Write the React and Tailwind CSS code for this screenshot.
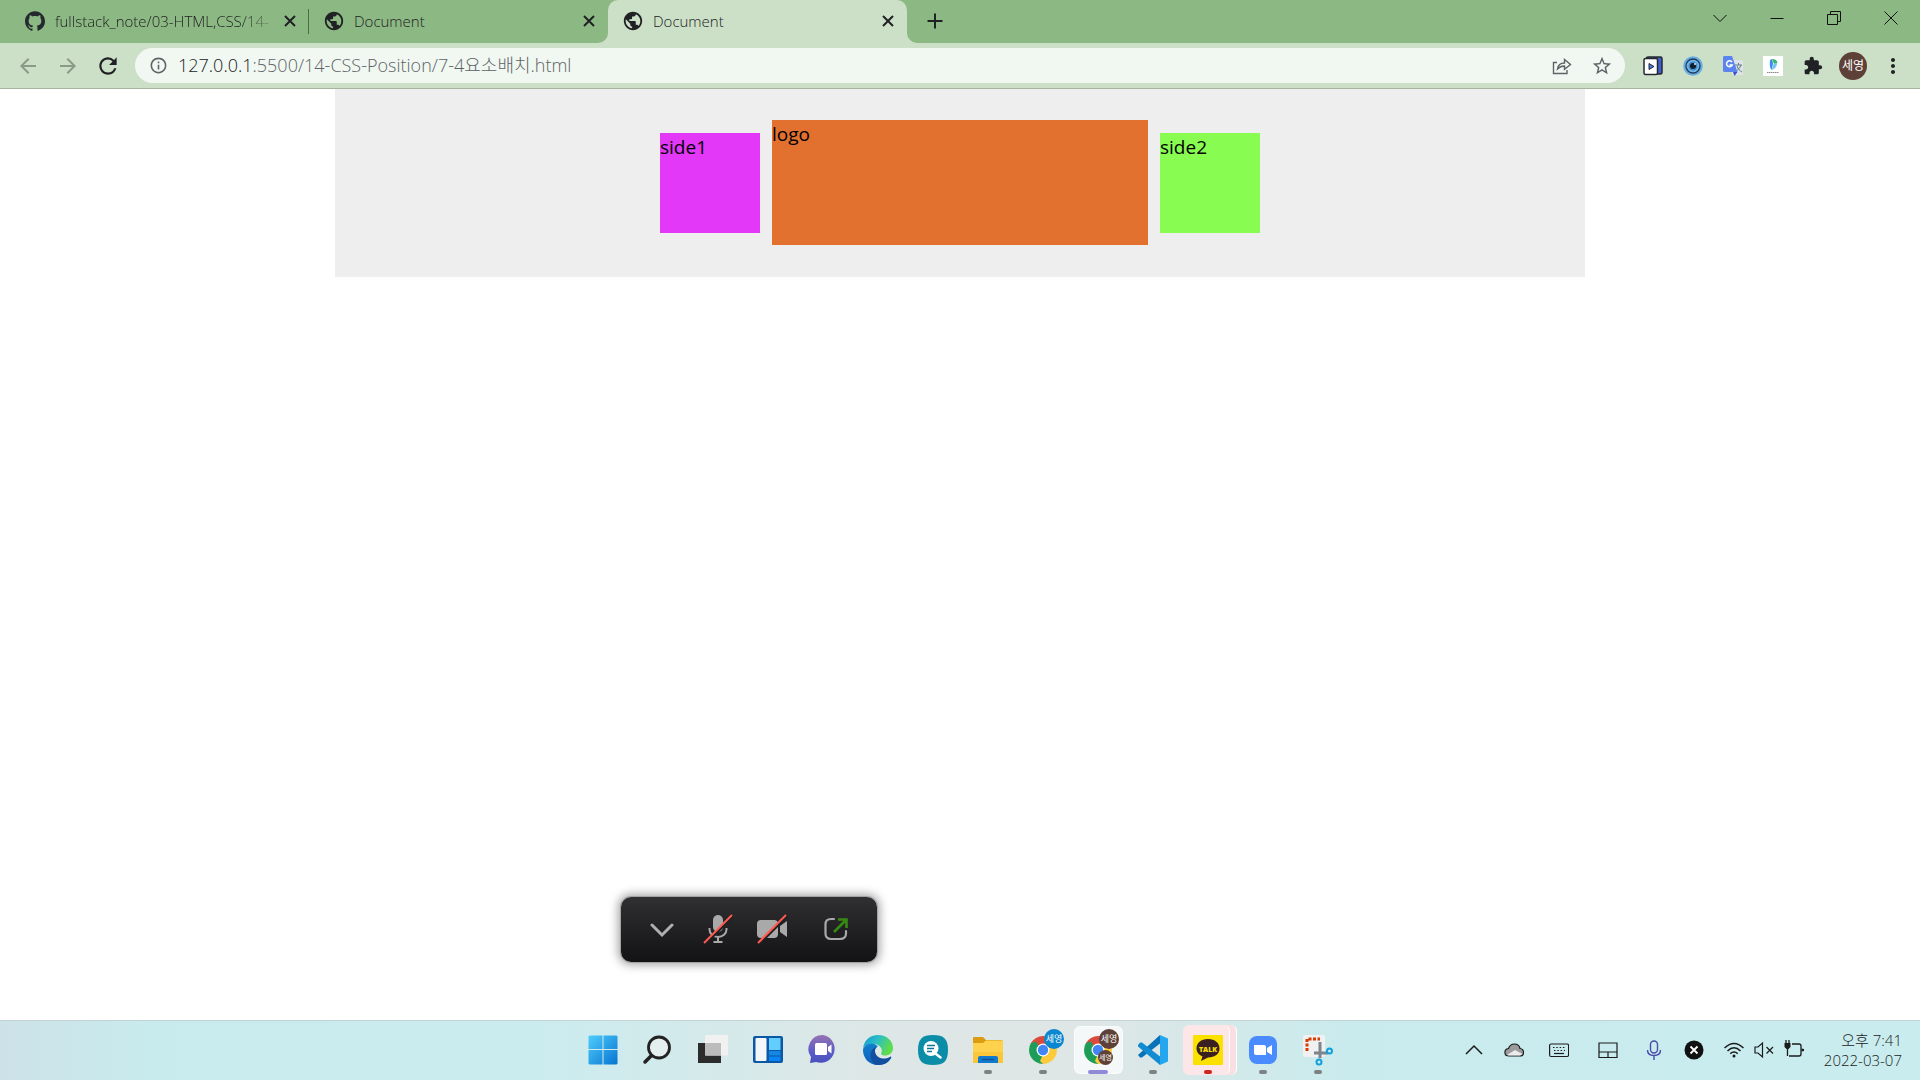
import React from "react";
import { SiGithub } from "react-icons/si";
import { MdPublic, MdExtension, MdStarBorder, MdOutlineInfo, MdMoreVert, MdRefresh, MdArrowBack, MdArrowForward } from "react-icons/md";

const FONT = "font-['Open_Sans','Noto_Sans_CJK_KR',sans-serif]";

function Tab({ icon, title, active, fade, divider }) {
  return (
    <div className={`relative flex h-full w-[299px] min-w-0 items-center pb-px pl-[15px] pr-[11px] ${active ? "rounded-t-[10px] bg-[#cce0c7]" : ""}`}>
      {active && (
        <>
          <svg viewBox="0 0 10 10" className="absolute -left-2.5 bottom-0 size-2.5" aria-hidden="true"><path d="M10 0V10H0A10 10 0 0 0 10 0Z" fill="#cce0c7" /></svg>
          <svg viewBox="0 0 10 10" className="absolute -right-2.5 bottom-0 size-2.5" aria-hidden="true"><path d="M0 0V10H10A10 10 0 0 1 0 0Z" fill="#cce0c7" /></svg>
        </>
      )}
      {icon}
      <span className={`mx-2.5 min-w-0 flex-1 whitespace-nowrap text-[15px] font-light text-[#202124] ${fade ? "[mask-image:linear-gradient(to_right,black_85%,transparent_105%)]" : ""}`}>{title}</span>
      <button aria-label="탭 닫기">
        <svg viewBox="0 0 16 16" className="size-4" fill="none" stroke="#202124" strokeWidth="2"><path d="M3 3L13 13M13 3L3 13" /></svg>
      </button>
      {divider && <span className="absolute right-0 top-[9px] h-[25px] w-px bg-[#4f6a4a]" />}
    </div>
  );
}

function WinButton({ label, children }) {
  return (
    <button aria-label={label} className="flex h-9 w-[57px] items-center justify-center">
      <svg viewBox="0 0 14 14" className="size-3.5" fill="none" stroke="#111" strokeWidth="1">{children}</svg>
    </button>
  );
}

function TabStrip() {
  const globe = <MdPublic className="size-[22px] -mx-px shrink-0 text-[#202124]" />;
  return (
    <div className="flex h-[43px] bg-[#8cb883] pl-2.5 pr-px">
      <Tab icon={<SiGithub className="size-5 shrink-0 text-[#24292f]" />} title="fullstack_note/03-HTML,CSS/14-" fade divider />
      <Tab icon={globe} title="Document" />
      <Tab icon={globe} title="Document" active />
      <button aria-label="새 탭" className="ml-5 pb-px">
        <svg viewBox="0 0 16 16" className="size-4" fill="none" stroke="#202124" strokeWidth="2"><path d="M8 .5V15.5M.5 8H15.5" /></svg>
      </button>
      <div className="ml-auto flex">
        <WinButton label="탭 검색"><path d="M.5 4L7 10.5L13.5 4" /></WinButton>
        <WinButton label="최소화"><path d="M.5 7.5H13.5" /></WinButton>
        <WinButton label="이전 크기로 복원"><path d="M.5 3.5H10.5V13.5H.5ZM3.5 3.5V.5H13.5V10.5H10.5" /></WinButton>
        <WinButton label="닫기"><path d="M.5 .5L13.5 13.5M13.5 .5L.5 13.5" /></WinButton>
      </div>
    </div>
  );
}

function ToolButton({ label, children }) {
  return <button aria-label={label} className="flex size-10 shrink-0 items-center justify-center">{children}</button>;
}

function Toolbar() {
  return (
    <div className="flex h-[46px] items-center border-b border-[#a3b59f] bg-[#cce0c7] pl-2 pr-[7px] text-[#202124]">
      <ToolButton label="뒤로"><MdArrowBack className="size-6 text-[#8a9a87]" /></ToolButton>
      <ToolButton label="앞으로"><MdArrowForward className="size-6 text-[#8a9a87]" /></ToolButton>
      <ToolButton label="새로고침"><MdRefresh className="size-[26px]" /></ToolButton>
      <div className="ml-[7px] flex h-[35px] flex-1 items-center rounded-full bg-[#f1f8f1] pl-3.5 pr-[3px]">
        <MdOutlineInfo className="size-[19px] text-[#5f6368]" />
        <div className="ml-2.5 flex-1 whitespace-nowrap text-[18px] font-light text-[#5f6368]"><span className="text-[#202124]">127.0.0.1</span>:5500/14-CSS-Position/7-4요소배치.html</div>
        <ToolButton label="공유">
          <svg viewBox="0 0 20 20" className="size-5" fill="none" stroke="#5f6368" strokeWidth="1.4"><path d="M5 6.500H1.500V17.500H15V14M5.500 13C6 9 8.500 7 12.500 7V3.500L18.500 8.500L12.500 13.200V10C9.500 10 7.500 10.800 5.500 13Z" /></svg>
        </ToolButton>
        <ToolButton label="북마크"><MdStarBorder className="size-[22px] text-[#5f6368]" /></ToolButton>
      </div>
      <div className="ml-2 flex">
        <ToolButton label="동영상 확장">
          <svg viewBox="0 0 20 20" className="size-5"><rect x="3.500" y="1" width="15.500" height="17" rx="1.500" fill="#3d5fd0" stroke="#26282e" strokeWidth="1.500" /><rect x="1" y="2.500" width="13.500" height="16" rx="1.500" fill="#fff" stroke="#26282e" strokeWidth="1.500" /><path d="M6 7.500L11 10.500L6 13.500Z" fill="#4a78ea" stroke="#26282e" /></svg>
        </ToolButton>
        <ToolButton label="눈 확장">
          <svg viewBox="0 0 20 20" className="size-5"><circle cx="10" cy="10" r="9.800" fill="#69ade2" /><circle cx="10" cy="10" r="7" fill="#6fb5ec" stroke="#233c58" strokeWidth="1.300" /><circle cx="10" cy="10" r="4.500" fill="#438bc8" /><circle cx="10" cy="10" r="3" fill="#111d2b" /><circle cx="12" cy="8" r="1" fill="#cfe9ff" /></svg>
        </ToolButton>
        <ToolButton label="Google 번역">
          <svg viewBox="0 0 20 20" className="size-5"><rect x="9" y="4" width="11" height="15" rx="1" fill="#dfe3e6" /><path d="M12 9H19M15.500 7V9M18 9C17 12 15 14 13 15M14 10C15 13 17 15 19 16" stroke="#607d8b" fill="none" /><path d="M1 0H9L14.500 16H1.500Q0 16 0 14.500V1.500Q0 0 1 0Z" fill="#5b84ee" /><path d="M10 16H14.500L11.500 20Z" fill="#3f51c4" /><path d="M9 6A3 3 0 1 0 9.300 9H6.500" stroke="#fff" strokeWidth="1.500" fill="none" /></svg>
        </ToolButton>
        <ToolButton label="확장">
          <svg viewBox="0 0 20 20" className="size-5"><path d="M0 0H20V20H0Z" fill="#fff" /><path d="M7 4L9 3L10 7L9 14Q6 12 7 4Z" fill="#3e8bea" /><path d="M9 3Q14 3 14.500 7L11 8Z" fill="#38b86a" /><path d="M14 7Q14 12 9 14L10.500 8Z" fill="#72c5f3" /><path d="M4 16.500H16" stroke="#8a8a8a" strokeDasharray="1.500 .5" /></svg>
        </ToolButton>
        <ToolButton label="확장 프로그램"><MdExtension className="size-5" /></ToolButton>
        <ToolButton label="프로필"><span className="flex size-7 items-center justify-center rounded-full bg-[#5d4037] text-xs text-white">세영</span></ToolButton>
        <ToolButton label="메뉴"><MdMoreVert className="size-6" /></ToolButton>
      </div>
    </div>
  );
}

function Page() {
  return (
    <main className="flex-1 bg-white">
      <header className="mx-auto flex h-[188px] max-w-[1250px] items-center justify-center gap-3 bg-[#eee] pb-px text-[19px] leading-7 text-black">
        <div className="size-[100px] bg-[#e338f7]">side1</div>
        <div className="h-[125px] w-[376px] bg-[#e2702f]">logo</div>
        <div className="size-[100px] bg-[#88fc50]">side2</div>
      </header>
    </main>
  );
}

function MeetingBar() {
  return (
    <div className="absolute bottom-[118px] left-[621px] flex h-[65px] w-64 items-center rounded-[10px] bg-linear-to-b from-[#303032] to-[#131315] pb-0.5 shadow-[0_0_10px_3px_rgba(0,0,0,0.35),0_0_0_1px_rgba(210,210,210,0.9)]">
      <button aria-label="접기" className="ml-[23px] flex w-9 justify-center">
        <svg viewBox="0 0 24 24" className="size-6" fill="none" stroke="#b0b0b0" strokeWidth="3" strokeLinecap="round"><path d="M2 8L12 18L22 8" /></svg>
      </button>
      <button aria-label="음소거 해제" className="ml-6 flex w-7 justify-center">
        <svg viewBox="0 0 30 30" className="size-[30px] shrink-0" fill="none" stroke="#a9a9a9" strokeWidth="2"><rect x="10" y="1" width="10" height="17" rx="5" fill="#a9a9a9" stroke="none" /><path d="M6.500 14V15.500A8.500 7.500 0 0 0 23.500 15.500V14M15 23V28M10.500 28H19.500" /><path d="M2 30L30 2" stroke="#1f1f21" strokeWidth="3" /><path d="M1 29L29 1" stroke="#ff5a52" strokeWidth="2" /></svg>
      </button>
      <button aria-label="비디오 시작" className="ml-6 flex w-8 justify-center">
        <svg viewBox="0 0 32 30" className="h-[30px] w-8" fill="#a9a9a9"><rect x="1" y="6" width="21" height="18" rx="4" /><path d="M24 12L31 7V23L24 18Z" /><path d="M3 30L31 2" stroke="#1f1f21" strokeWidth="3" /><path d="M2 29L30 1" stroke="#ff5a52" strokeWidth="2" /></svg>
      </button>
      <button aria-label="공유" className="ml-9 flex w-6 justify-center">
        <svg viewBox="0 0 24 24" className="size-6" fill="none" strokeWidth="2.200"><path d="M10 2H7Q1.500 2 1.500 7.500V16.500Q1.500 22 7 22H16Q22 22 22 16.500V14" stroke="#a9a9a9" strokeLinecap="round" /><path d="M10 15L22 3M14 2.500H22.500V11" stroke="#368a12" strokeWidth="2.600" /></svg>
      </button>
    </div>
  );
}

function ChromeMark() {
  return (
    <>
      <path d="M14 14L1.900 7A14 14 0 0 1 26.100 7Z" fill="#dc4a3d" />
      <path d="M14 14L26.100 7A14 14 0 0 1 14 28Z" fill="#fccb3c" />
      <path d="M14 14L14 28A14 14 0 0 1 1.900 7Z" fill="#1d9d58" />
      <path d="M14 7.500H26.400L24 12H18Z" fill="#dc4a3d" />
      <path d="M8.400 17.300L1.900 7L7 5.500L12 14Z" fill="#1d9d58" />
      <path d="M19.600 17.300L14 28L11 25L15 16Z" fill="#fccb3c" />
      <circle cx="14" cy="14" r="6.500" fill="#fff" />
      <circle cx="14" cy="14" r="5.200" fill="#4285f4" />
    </>
  );
}

function TaskButton({ label, children, state }) {
  return (
    <button aria-label={label} className="relative flex h-full w-[55px] items-center justify-center">
      {state === "active" && <span className="absolute inset-x-[3px] inset-y-[5px] rounded-md border border-white/60 bg-[#f4f8f8]" />}
      {state === "alert" && <><span className="absolute inset-y-1 left-4 -right-px rounded-md border-r border-white bg-[#f9dfe1]" /><span className="absolute inset-y-1 left-0.5 right-1.5 rounded-md border-r border-white bg-[#fde6e8]" /></>}
      <svg viewBox="0 0 30 30" className="relative size-[30px] overflow-visible">{children}</svg>
      {state === "open" && <span className="absolute bottom-[5px] h-1 w-2 rounded-full bg-[#7c8182]" />}
      {state === "active" && <span className="absolute bottom-[5px] h-1 w-5 rounded-full bg-[#8f8bd8]" />}
      {state === "alert" && <span className="absolute bottom-[5px] h-1 w-2 rounded-full bg-[#c8281e]" />}
    </button>
  );
}

function TaskApps() {
  return (
    <div className="flex h-full pl-px">
      <TaskButton label="시작">
        <defs><linearGradient id="win" x1="0" y1="0" x2="1" y2="1"><stop stopColor="#4fcdfd" /><stop offset="1" stopColor="#0674d0" /></linearGradient></defs>
        <path d="M1.500 .5H14.500V14H.5V1.500ZM15.500 .5H28.500L29.500 1.500V14H15.500ZM.5 15H14.500V29.500H1.500L.5 28.500ZM15.500 15H29.500V28.500L28.500 29.500H15.500Z" fill="url(#win)" />
      </TaskButton>
      <TaskButton label="검색"><circle cx="16" cy="12.500" r="10.500" fill="#e5eeee" stroke="#222" strokeWidth="2.800" /><path d="M8.500 20.500L2 27" stroke="#222" strokeWidth="3.500" strokeLinecap="round" /></TaskButton>
      <TaskButton label="작업 보기"><path d="M0 8H23V28H0Z" fill="#2c2c2c" /><rect x="7" y="0" width="23" height="20.500" rx="1" fill="#f1f1f1" /><path d="M7 8H23V20.500H7Z" fill="#bcbcbc" /></TaskButton>
      <TaskButton label="위젯"><rect x="0" y="1" width="30" height="27" rx="2" fill="#0d58a4" /><rect x="2.500" y="3" width="11" height="23" rx="1" fill="#f4f7fa" /><path d="M16 3H27.500V15H16Z" fill="#62ceff" /><path d="M16 16H27.500V20.500H16Z" fill="#1487e4" /><path d="M16 21.500H27.500V26H16Z" fill="#0b85f4" /></TaskButton>
      <TaskButton label="채팅">
        <defs><linearGradient id="chat" x1="0" y1="0" x2="0" y2="1"><stop stopColor="#9673b2" /><stop offset=".6" stopColor="#5b5cc8" /><stop offset="1" stopColor="#4850bd" /></linearGradient></defs>
        <path d="M15 0A14 14 0 1 1 8 27L2 28L3 22A14 14 0 0 1 15 0Z" fill="url(#chat)" /><rect x="7" y="8" width="12" height="12" rx="1.500" fill="#fff" /><path d="M20 12L23.500 9.500V18.500L20 16Z" fill="#fff" />
      </TaskButton>
      <TaskButton label="Edge">
        <defs><linearGradient id="edgeA" x1="0" y1="0" x2="1" y2=".4"><stop stopColor="#1395d4" /><stop offset=".5" stopColor="#2bbfc4" /><stop offset="1" stopColor="#5fdc4a" /></linearGradient><linearGradient id="edgeB" x1="0" y1="0" x2="0" y2="1"><stop stopColor="#1080ce" /><stop offset="1" stopColor="#0f5fb8" /></linearGradient></defs>
        <path d="M0 14C1 5 7 0 15 0C24 0 30 6 30 13C30 18 26 20.500 22 20.500C19 20.500 17.500 19.500 18.500 17.500C20 14 17 9.500 11 9C5 8.500 1 11 0 14Z" fill="url(#edgeA)" />
        <path d="M0 14C2 9.500 7 8 11 9C15 10 15.500 12 13 13C11 14 11.500 21 17 23.500C21 25 25 23.500 27 22C28 21.500 28.500 22 28 23C25 28 20 30 15 30C6 30 -.5 23 0 14Z" fill="url(#edgeB)" />
        <path d="M13 12C7 14 5 23 12 29.600C19 31 25 28.500 28 23C28.500 22 28 21.500 27 22C20 26 11 22 12 15Z" fill="#124f9e" />
      </TaskButton>
      <TaskButton label="화면 검색"><path d="M15 0C26 0 30 4 30 15S26 30 15 30S0 26 0 15S4 0 15 0Z" fill="#0b8da8" /><circle cx="13" cy="13.500" r="7.500" fill="#fff" /><path d="M18 19L22.500 22.500" stroke="#fff" strokeWidth="2.500" strokeLinecap="round" /><path d="M9 10.500H17M9 13.500H16M9 16.500H14" stroke="#0b7896" strokeWidth="1.500" /></TaskButton>
      <TaskButton label="파일 탐색기" state="open"><path d="M0 3Q0 2 1 2H10L13 5H28Q30 5 30 7V12H0Z" fill="#db9c12" /><path d="M0 8L10 8L13 5.500H30V28H0Z" fill="#ffd24e" /><path d="M0 17H30V28H0Z" fill="#fbc63a" /><path d="M5 28V23Q5 21 7 21H23Q25 21 25 23V28Z" fill="#127bd0" /><path d="M9 24.500H21" stroke="#0b5498" strokeWidth="1.500" /></TaskButton>
      <TaskButton label="Chrome 세영" state="open"><g transform="translate(1 1)"><ChromeMark /></g><circle cx="26" cy="4" r="10" fill="#0b86d0" /><text x="26" y="7" textAnchor="middle" fontSize="9" fill="#fff">세영</text></TaskButton>
      <TaskButton label="Chrome" state="active"><g transform="translate(1 1)"><ChromeMark /></g><circle cx="26" cy="4" r="10" fill="#5d4037" /><text x="26" y="7" textAnchor="middle" fontSize="9" fill="#fff">세영</text><circle cx="22.500" cy="22.500" r="7.500" fill="#5d4037" /><text x="22.500" y="25" textAnchor="middle" fontSize="7" fill="#fff">세영</text></TaskButton>
      <TaskButton label="Visual Studio Code" state="open"><path d="M22 0L30 3.500V26.500L22 30Z" fill="#24a7ee" /><path d="M0 20L22 0V8.500L4 22.500L2 22.500Z" fill="#0873b8" /><path d="M0 10L2 7.500H4L22 21.500V30L0 11.500Z" fill="#128bd2" /></TaskButton>
      <TaskButton label="카카오톡" state="alert"><rect width="30" height="30" rx="1" fill="#fae100" /><path d="M15 4C22 4 26.500 8 26.500 13.500S22 22.500 15 22.500L8 26L9.500 21.500C5.500 20 3.500 17 3.500 13.500C3.500 8 8 4 15 4Z" fill="#3b2022" /><text x="15" y="16.500" textAnchor="middle" fontSize="7" fontWeight="800" fill="#fae100">TALK</text></TaskButton>
      <TaskButton label="Zoom" state="open"><rect x="1" y="1" width="28" height="28" rx="8" fill="#4a8cff" /><path d="M6 10H16Q18 10 18 12V20H8Q6 20 6 18ZM19 13L24 10V20L19 17Z" fill="#fff" /></TaskButton>
      <TaskButton label="캡처 도구" state="open"><rect width="22" height="22" rx="2" fill="#f1f1f1" /><path d="M4 16V4H17" fill="none" stroke="#d83b01" strokeWidth="3" strokeDasharray="3 1.500" /><path d="M17 7V23M11 18H25" stroke="#7c858b" strokeWidth="3" /><circle cx="26.500" cy="16" r="2.500" fill="none" stroke="#129fdd" strokeWidth="2" /><circle cx="16" cy="27" r="2.500" fill="none" stroke="#129fdd" strokeWidth="2" /></TaskButton>
    </div>
  );
}

function TrayButton({ label, width, children }) {
  return (
    <button aria-label={label} className={`flex h-full shrink-0 items-center justify-center ${width}`}>
      <svg viewBox="0 0 20 20" className="size-5" fill="none" stroke="#1b1b1b" strokeWidth="1.200">{children}</svg>
    </button>
  );
}

function Tray() {
  return (
    <div className="flex h-full items-center pr-[18px]">
      <TrayButton label="숨겨진 아이콘 표시" width="w-10"><path d="M2 14L10 6L18 14" strokeWidth="1.500" /></TrayButton>
      <TrayButton label="OneDrive" width="w-10"><path d="M1 13Q.5 9 4.500 8.500Q6 4 10.500 4Q15 4 16 8.500Q19.500 9 19.500 12.500Q19.500 16 16 16H5Q1 16 1 13Z" fill="#9b9b9b" /><path d="M3 15L11 10L18.500 14L16 15.400H5Z" fill="#ececec" stroke="none" /></TrayButton>
      <TrayButton label="터치 키보드" width="w-[50px]"><rect x=".6" y="4" width="19" height="12.500" rx="1.500" /><path d="M4 7.500H17M5 10.500H16" strokeDasharray="1.500 1.800" /><path d="M5 13.500H15" /></TrayButton>
      <TrayButton label="터치 패드" width="w-12"><path d="M1 3H19V17.500H1ZM1 12H19M10 12V17.500" /></TrayButton>
      <TrayButton label="마이크" width="w-11"><g stroke="#4a4cab" strokeWidth="1.400"><rect x="6.500" y="1" width="7" height="12" rx="3.500" /><path d="M3.500 10Q3.500 15.500 10 15.500T16.500 10M10 16V20" /></g></TrayButton>
      <TrayButton label="상태" width="w-9"><circle cx="10" cy="10" r="9.500" fill="#111" stroke="none" /><path d="M6.500 6.500L13.500 13.500M13.500 6.500L6.500 13.500" stroke="#fff" strokeWidth="1.800" /></TrayButton>
      <button aria-label="네트워크, 소리, 배터리" className="ml-3 flex h-full items-center gap-2.5">
        <svg viewBox="0 0 20 20" className="size-5" fill="none" stroke="#1b1b1b" strokeWidth="1.500"><path d="M.5 8Q10 -1 19.500 8M3.500 11Q10 4.500 16.500 11M6.300 13.600Q10 10.300 13.700 13.600" /><circle cx="10" cy="16" r="1.500" fill="#1b1b1b" stroke="none" /></svg>
        <svg viewBox="0 0 20 20" className="size-5" fill="none" stroke="#1b1b1b" strokeWidth="1.200"><path d="M1 7H4L8.500 3V17L4 13H1ZM12.500 7L19 13.500M19 7L12.500 13.500" /></svg>
        <svg viewBox="0 0 20 20" className="size-5" fill="none" stroke="#1b1b1b" strokeWidth="1.300"><path d="M8 4H15Q17 4 17 6V14Q17 16 15 16H5" /><path d="M.5 3H6.500V7L4.500 9H2.500L.5 7ZM17.500 8.500L20 9V11L17.500 11.500Z" fill="#1b1b1b" stroke="none" /><path d="M2 0V4M5 0V4M3.500 8V16" /></svg>
      </button>
      <button className="ml-5 text-right text-[15px] font-light leading-5 text-[#1b1b1b]">
        <time className="block">오후 7:41</time>
        <time className="block">2022-03-07</time>
      </button>
    </div>
  );
}

export default function App() {
  return (
    <div className={`relative flex min-h-screen flex-col bg-white ${FONT}`}>
      <TabStrip />
      <Toolbar />
      <Page />
      <MeetingBar />
      <footer className="grid h-[60px] grid-cols-[1fr_auto_1fr] border-t border-[#c3d3d5] bg-[linear-gradient(90deg,#cde2e8_0%,#c8ebed_8%,#cbecef_28%,#dde7e6_45%,#dfe6e6_57%,#c9ebed_70%,#c9ecee_100%)] pb-px">
        <div />
        <TaskApps />
        <div className="flex justify-end"><Tray /></div>
      </footer>
    </div>
  );
}
